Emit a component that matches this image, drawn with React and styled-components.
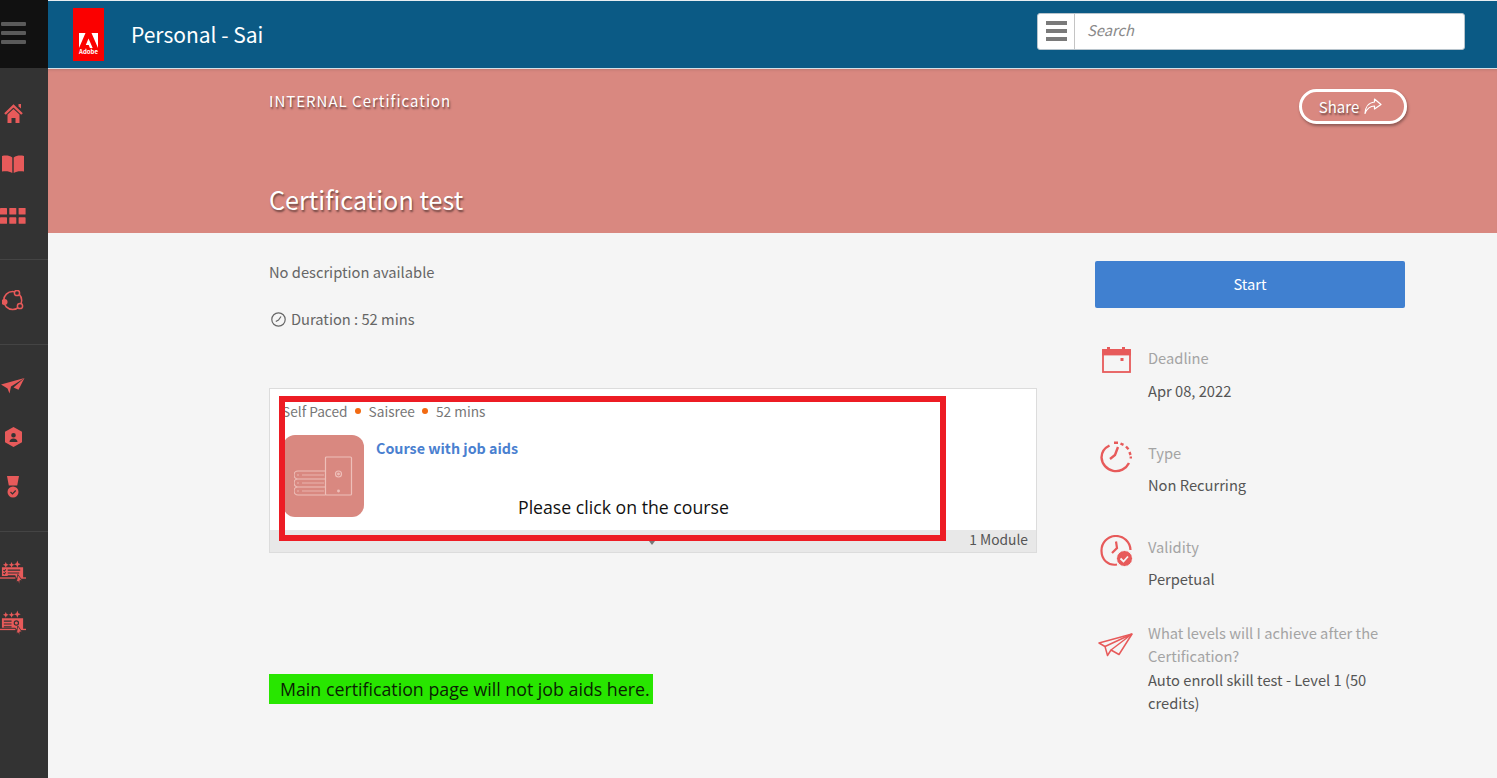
import React from 'react';
import styled, { createGlobalStyle } from 'styled-components';

const SOURCE = `"Noto Sans CJK SC", "Source Sans Pro", "Noto Sans", sans-serif`;
const SEGOE = `"Open Sans", "Noto Sans", sans-serif`;
const CORAL = '#e75a5a';

const Global = createGlobalStyle`
    html, body { margin: 0; padding: 0; background: #f5f5f5; }
    body { font-family: ${SOURCE}; overflow: hidden; }
    * { box-sizing: border-box; }
`;

const Page = styled.div`
    display: flex;
    width: 1497px;
    height: 778px;
    overflow: hidden;
`;

const Rail = styled.nav`
    width: 48px;
    flex: none;
    background: #333333;
`;

const RailTop = styled.div`
    height: 68px;
    background: #111111;
    display: flex;
    flex-direction: column;
    justify-content: center;
    gap: 5px;
    padding: 0 0 2px 1px;
`;

const RailBar = styled.span`
    display: block;
    width: 25px;
    height: 4px;
    border-radius: 1px;
    background: #5a5a5a;
`;

const RailGroup = styled.div`
    padding: ${(p) => p.$top}px 5px ${(p) => p.$bottom}px 0;
    border-bottom: ${(p) => (p.$last ? 'none' : '1px solid #444444')};
`;

const RailItem = styled.div`
    width: 26px;
    height: ${(p) => p.$h || 51}px;
    display: flex;
    align-items: center;
    justify-content: center;
    color: ${CORAL};
`;

const Main = styled.div`
    flex: 1;
    min-width: 0;
`;

const Header = styled.header`
    height: 69px;
    background: #0b5a85;
    border-top: 1px solid #e8eef2;
    border-bottom: 1px solid #d5e0e6;
    display: flex;
    align-items: center;
    padding: 0 32px 0 25px;
`;

const Logo = styled.div`
    width: 31px;
    height: 53px;
    background: #fb0000;
    color: #fff;
    display: flex;
    flex-direction: column;
    align-items: center;
    justify-content: flex-end;
    padding-bottom: 6px;
    font-size: 6px;
    font-weight: 700;
    line-height: 7px;
`;

const OrgName = styled.div`
    margin: 0 0 2px 27px;
    color: #fff;
    font-size: 21px;
    flex: 1;
`;

const SearchBox = styled.div`
    width: 428px;
    height: 37px;
    margin-bottom: 7px;
    display: flex;
    background: #fff;
    border: 1px solid #b8c4cc;
    border-radius: 3px;
`;

const SearchMenu = styled.div`
    width: 37px;
    border-right: 1px solid #c4c4c4;
    display: flex;
    flex-direction: column;
    justify-content: center;
    align-items: center;
    gap: 4px;
`;

const SearchBar = styled.span`
    width: 21px;
    height: 4px;
    background: #7a7a7a;
`;

const SearchHint = styled.div`
    padding-left: 12px;
    font-size: 14.7px;
    font-style: italic;
    line-height: 31px;
    color: #8a8a8a;
`;

const Banner = styled.section`
    height: 164px;
    background: #d98880;
    box-shadow: inset 0 3px 3px -2px rgba(0, 0, 0, 0.12);
    padding: 20px 90px 0 221px;
    color: #fff;
    text-shadow: 1px 2px 2px rgba(0, 0, 0, 0.5);
`;

const BannerTop = styled.div`
    display: flex;
    justify-content: space-between;
    align-items: flex-start;
    height: 90px;
`;

const Kicker = styled.div`
    font-size: 15px;
    line-height: 24px;
    letter-spacing: 1px;
`;

const ShareButton = styled.div`
    width: 108px;
    height: 35px;
    border: 3px solid #fff;
    border-radius: 18px;
    display: flex;
    align-items: center;
    justify-content: center;
    gap: 5px;
    padding-right: 5px;
    font-size: 15px;
    box-shadow: 1px 2px 3px rgba(0, 0, 0, 0.35);
`;

const BannerTitle = styled.h1`
    margin: 0;
    font-size: 25.2px;
    font-weight: 400;
    line-height: 40px;
`;

const Body = styled.div`
    display: flex;
    gap: 58px;
    padding: 28px 92px 0 221px;
`;

const LeftCol = styled.div`
    width: 768px;
    flex: none;
`;

const Paragraph = styled.div`
    font-size: 14.7px;
    line-height: 24px;
    color: #666666;
    margin-top: -1px;
`;

const Duration = styled(Paragraph)`
    display: flex;
    align-items: center;
    gap: 5px;
    margin-top: 23px;
    padding-left: 2px;
`;

const Card = styled.div`
    position: relative;
    margin-top: 57px;
    height: 165px;
    background: #fff;
    border: 1px solid #dcdcdc;
    display: flex;
    flex-direction: column;
`;

const CardMeta = styled.div`
    display: flex;
    align-items: center;
    padding: 10px 0 0 12px;
    font-size: 13.7px;
    line-height: 24px;
    color: #777777;
`;

const Dot = styled.span`
    width: 6px;
    height: 6px;
    border-radius: 50%;
    background: #f26a12;
    margin: 0 7.5px;
`;

const CardBody = styled.div`
    flex: 1;
    display: flex;
    gap: 12px;
    padding: 12px 0 0 13px;
`;

const Thumb = styled.div`
    width: 81px;
    height: 82px;
    padding: 21px 0 0 11px;
    border-radius: 12px;
    background: #d98880;

    svg {
        display: block;
    }
`;

const CourseTitle = styled.div`
    font-size: 14.3px;
    font-weight: 600;
    line-height: 26px;
    color: #4a80d0;
`;

const CardFoot = styled.div`
    height: 22px;
    background: #e8e8e8;
    font-size: 13.8px;
    line-height: 19px;
    color: #555555;
    text-align: right;
    padding-right: 8px;
`;

const Notch = styled.span`
    position: absolute;
    left: 379px;
    bottom: 7px;
    width: 0;
    height: 0;
    border-left: 3px solid transparent;
    border-right: 3px solid transparent;
    border-top: 4px solid #777777;
`;

const Callout = styled.div`
    position: absolute;
    left: 9px;
    top: 7px;
    width: 667px;
    height: 145px;
    border: 6px solid #ed1c24;
    display: flex;
    align-items: flex-end;
    padding: 0 0 16px 233px;
    font-family: ${SEGOE};
    font-size: 17.7px;
    line-height: 24px;
    color: #111111;
`;

const GreenNote = styled.div`
    margin-top: 121px;
    width: 384px;
    height: 30px;
    background: #28e600;
    font-family: ${SEGOE};
    font-size: 17.8px;
    line-height: 30px;
    color: #0a1f04;
    padding-left: 11px;
    white-space: nowrap;
`;

const RightCol = styled.aside`
    width: 310px;
    flex: none;
`;

const StartButton = styled.div`
    height: 47px;
    border-radius: 2px;
    background: #4080d0;
    color: #fff;
    font-size: 14.7px;
    padding-bottom: 2px;
    display: flex;
    align-items: center;
    justify-content: center;
`;

const InfoRow = styled.div`
    display: flex;
    align-items: flex-start;
    margin-top: ${(p) => p.$gap}px;
`;

const InfoIcon = styled.div`
    width: 53px;
    flex: none;
    display: flex;
    padding-top: ${(p) => p.$pad || 0}px;
    padding-left: ${(p) => p.$left || 5}px;
    color: ${CORAL};
`;

const InfoLabel = styled.div`
    font-size: 14.7px;
    line-height: 23.5px;
    color: #a4a4a4;
`;

const InfoValue = styled.div`
    margin-top: ${(p) => p.$gap}px;
    font-size: 14.7px;
    line-height: 23.5px;
    color: #555555;
`;

const InfoText = styled.div`
    width: 252px;
`;

const Home = () => (
    <svg width="19" height="19" viewBox="0 0 19 19" fill="none" stroke="currentColor">
        <path d="M1 10 9.500 2l8.500 8" strokeWidth="2.400" />
        <path fillRule="evenodd" d="M3.500 10.500 9.500 5l6 5.500V19h-4v-5h-4v5h-4z" fill="currentColor" stroke="none" />
        <path d="M14.500 0H17v4.500L14.500 2.500z" fill="currentColor" stroke="none" />
    </svg>
);

const Book = () => (
    <svg width="22" height="19" viewBox="0 0 22 19" fill="currentColor">
        <path d="M0 1C4 0 7.500 .5 10.300 2.500V18C7.500 16.200 4 15.800 0 16.500z" />
        <path d="M22 1C18 0 14.500 .5 11.700 2.500V18c2.800-1.800 6.300-2.200 10.300-1.500z" />
    </svg>
);

const Grid = () => (
    <svg width="26" height="16" viewBox="0 0 26 16" fill="currentColor">
        {[0, 9.300, 18.600].map((x) => (
            <g key={x}>
                <rect x={x} y="0" width="7" height="6.500" rx=".6" />
                <rect x={x} y="9.300" width="7" height="6.500" rx=".6" />
            </g>
        ))}
    </svg>
);

const Org = () => (
    <svg width="23" height="22" viewBox="0 0 23 22" fill="none" stroke="currentColor" strokeWidth="1.500">
        <circle cx="10.700" cy="10.500" r="9" />
        <circle cx="15" cy="3" r="2.600" fill="#333" />
        <circle cx="18" cy="16" r="2.600" fill="#333" />
        <circle cx="2.500" cy="12" r="2.300" fill="currentColor" />
    </svg>
);

const PlaneSolid = () => (
    <svg width="24" height="16" viewBox="0 0 24 16" fill="currentColor">
        <path d="M0 6.500 23.500 0 10 8.500l-1.500 7-2-5z" />
        <path d="M23.500 0 12.500 9.500l5 2.200z" />
    </svg>
);

const Hexagon = () => (
    <svg width="17" height="20" viewBox="0 0 17 20" fill="currentColor">
        <path fillRule="evenodd" d="M8.500 0 17 4.800v10.400L8.500 20 0 15.200V4.800zM8.500 6a2.300 2.300 0 1 0 0 4.600 2.300 2.300 0 0 0 0-4.600zM4.500 15h8c0-2.200-1.800-3.500-4-3.500s-4 1.300-4 3.500z" />
    </svg>
);

const Medal = () => (
    <svg width="14" height="23" viewBox="0 0 14 23" fill="currentColor">
        <path d="M1 0h12l-1.800 9.500H2.800z" />
        <circle cx="7" cy="16" r="5.500" />
        <path d="m4.500 16 2 2 3.200-3.500" stroke="#333" strokeWidth="1.200" fill="none" />
    </svg>
);

const STARS = 'M6 1.500 6.900 3.600 9 4.500 6.900 5.400 6 7.500 5.100 5.400 3 4.500 5.100 3.600zM12 1.500 12.900 3.600 15 4.500 12.900 5.400 12 7.500 11.100 5.400 9 4.500 11.100 3.600zM18 0 19 2.800 21.500 4 19 5 18 7.500 17 5 14.500 4 17 2.800z';

const CertList = () => (
    <svg width="27" height="26" viewBox="0 0 27 26" fill="currentColor">
        <path d={STARS} />
        <path d="M2 7h22v11.500h-6.500L16 16H2z" />
        <rect x="0" y="17.500" width="16" height="1.400" />
        <rect x="21" y="17.500" width="6" height="1.400" />
        <path d="M18.500 14.500 23 21l-2.400-.3-.2 4.300-1.600-3.500-1.800 1z" stroke="#333" strokeWidth=".8" />
        <g fill="none" stroke="#333" strokeWidth="1.100">
            <path d="M8 10h13M8 13h12M8 16h8" />
            <path d="M3.500 10l1 1 1.500-1.800M3.500 13l1 1 1.500-1.800" />
        </g>
    </svg>
);

const CertSearch = () => (
    <svg width="27" height="26" viewBox="0 0 27 26" fill="currentColor">
        <path d={STARS} />
        <path d="M2 8h22v12h-6.500L16 18H2z" />
        <rect x="0" y="19" width="16" height="1.400" />
        <rect x="21" y="19" width="6" height="1.400" />
        <path d="M18.500 16 23 22.500l-2.400-.3-.2 3.800-1.600-3-1.800 1z" stroke="#333" strokeWidth=".8" />
        <g fill="none" stroke="#333" strokeWidth="1.200">
            <path d="M4 11h8M4 14h8M4 17h8" />
            <circle cx="17" cy="13" r="2.200" />
        </g>
    </svg>
);

const AdobeMark = () => (
    <svg width="19" height="15" viewBox="0 0 19 15" fill="#fff">
        <path d="M0 0h6.500L0 15zM12.500 0H19v15zM9.500 5.500l4.200 9.500h-2.800l-1.200-3H6.800z" />
    </svg>
);

const ShareArrow = () => (
    <svg width="18" height="17" viewBox="0 0 18 17" fill="none" stroke="#fff" strokeWidth="1.200" strokeLinejoin="round">
        <path d="M10.500 1 17 6.500 10.500 11V8C6 8 3 10.500 1 15.500 1.300 9.500 4.500 4.500 10.500 4z" />
    </svg>
);

const SmallClock = () => (
    <svg width="15" height="15" viewBox="0 0 15 15" fill="none" stroke="#666" strokeWidth="1.200">
        <circle cx="7.500" cy="7.500" r="6.700" />
        <path d="M10 4.500 7.500 8 4.800 9.500" />
    </svg>
);

const Shelf = () => (
    <svg width="60" height="40" viewBox="0 0 60 40" fill="none" stroke="#eebfb9" strokeWidth="1.200">
        <rect x="31.500" y="1" width="26" height="38" rx="1" />
        <circle cx="44.500" cy="18" r="3" />
        <circle cx="44.500" cy="18" r=".8" fill="#eebfb9" />
        <circle cx="44.500" cy="35" r=".8" fill="#eebfb9" />
        <path d="M31.500 15H4a3.500 3.500 0 0 0 0 8h27.500M31.500 23H4a3.500 3.500 0 0 0 0 8h27.500M31.500 31H4a3.500 3.500 0 0 0 0 8h27.500" />
        <path d="M3 19h2M8 19h22M3 27h2M8 27h22M3 35h2M8 35h22" strokeWidth=".8" />
    </svg>
);

const Calendar = () => (
    <svg width="29" height="27" viewBox="0 0 29 27" fill="none" stroke="currentColor" strokeWidth="1.800">
        <rect x="1" y="4" width="27" height="22" />
        <rect x="1" y="4" width="27" height="4.500" fill="currentColor" />
        <rect x="5" y="1" width="3" height="5" fill="currentColor" stroke="none" />
        <rect x="20" y="1" width="3" height="5" fill="currentColor" stroke="none" />
        <rect x="18.500" y="12" width="3" height="3" fill="currentColor" stroke="none" />
    </svg>
);

const Stopwatch = () => (
    <svg width="33" height="32" viewBox="0 0 33 32" fill="none" stroke="currentColor" strokeWidth="2.400">
        <path d="M9.500 4.500C4.500 7 1.500 11.500 1.500 16.500a14.500 14.500 0 0 0 27.500 5.500" />
        <path d="M14 1.800h4M20.500 2.500l3 1.400M26 5.500l2.500 2.800M29.500 11l1 3M30.800 15.500v2" />
        <path d="M18 6 15 14 10 18" />
    </svg>
);

const ValidClock = () => (
    <svg width="33" height="32" viewBox="0 0 33 32" fill="none" stroke="currentColor" strokeWidth="2.200">
        <path d="M17 29.500C8 31 1.500 24.500 1.500 16a14.500 14.500 0 0 1 29-1" />
        <path d="M16 6.500 17 13 12 18" />
        <circle cx="24.500" cy="23.500" r="8" fill="currentColor" stroke="#f5f5f5" strokeWidth="1" />
        <path d="m20.500 23.500 3 3 4.500-5" stroke="#f5f5f5" strokeWidth="1.800" />
    </svg>
);

const PlaneOutline = () => (
    <svg width="35" height="24" viewBox="0 0 35 24" fill="none" stroke="currentColor" strokeWidth="1.500" strokeLinejoin="round">
        <path d="M1 10 34 1 21 21.500l-8-4.500-3.500 5.500-2.500-9z" />
        <path d="M34 1 7 13.500M34 1 13 17" />
    </svg>
);

export default function App() {
    return (
        <Page>
            <Global />
            <Rail>
                <RailTop>
                    <RailBar />
                    <RailBar />
                    <RailBar />
                </RailTop>
                <RailGroup $top={20} $bottom={18}>
                    <RailItem><Home /></RailItem>
                    <RailItem><Book /></RailItem>
                    <RailItem><Grid /></RailItem>
                </RailGroup>
                <RailGroup $top={15} $bottom={18}>
                    <RailItem><Org /></RailItem>
                </RailGroup>
                <RailGroup $top={15} $bottom={18}>
                    <RailItem><PlaneSolid /></RailItem>
                    <RailItem><Hexagon /></RailItem>
                    <RailItem><Medal /></RailItem>
                </RailGroup>
                <RailGroup $top={16} $bottom={0} $last>
                    <RailItem $h={50}><CertList /></RailItem>
                    <RailItem $h={50}><CertSearch /></RailItem>
                </RailGroup>
            </Rail>
            <Main>
                <Header>
                    <Logo>
                        <AdobeMark />
                        <span>Adobe</span>
                    </Logo>
                    <OrgName>Personal - Sai</OrgName>
                    <SearchBox>
                        <SearchMenu>
                            <SearchBar />
                            <SearchBar />
                            <SearchBar />
                        </SearchMenu>
                        <SearchHint>Search</SearchHint>
                    </SearchBox>
                </Header>
                <Banner>
                    <BannerTop>
                        <Kicker>INTERNAL Certification</Kicker>
                        <ShareButton>Share <ShareArrow /></ShareButton>
                    </BannerTop>
                    <BannerTitle>Certification test</BannerTitle>
                </Banner>
                <Body>
                    <LeftCol>
                        <Paragraph>No description available</Paragraph>
                        <Duration><SmallClock /> Duration : 52 mins</Duration>
                        <Card>
                            <CardMeta>
                                Self Paced <Dot /> Saisree <Dot /> 52 mins
                            </CardMeta>
                            <CardBody>
                                <Thumb><Shelf /></Thumb>
                                <CourseTitle>Course with job aids</CourseTitle>
                            </CardBody>
                            <CardFoot>1 Module</CardFoot>
                            <Notch />
                            <Callout>Please click on the course</Callout>
                        </Card>
                        <GreenNote>Main certification page will not job aids here.</GreenNote>
                    </LeftCol>
                    <RightCol>
                        <StartButton>Start</StartButton>
                        <InfoRow $gap={38}>
                            <InfoIcon $pad={0} $left={7}><Calendar /></InfoIcon>
                            <InfoText>
                                <InfoLabel>Deadline</InfoLabel>
                                <InfoValue $gap={9.5}>Apr 08, 2022</InfoValue>
                            </InfoText>
                        </InfoRow>
                        <InfoRow $gap={38}>
                            <InfoIcon $pad={0}><Stopwatch /></InfoIcon>
                            <InfoText>
                                <InfoLabel>Type</InfoLabel>
                                <InfoValue $gap={9}>Non Recurring</InfoValue>
                            </InfoText>
                        </InfoRow>
                        <InfoRow $gap={38}>
                            <InfoIcon $pad={0}><ValidClock /></InfoIcon>
                            <InfoText>
                                <InfoLabel>Validity</InfoLabel>
                                <InfoValue $gap={9}>Perpetual</InfoValue>
                            </InfoText>
                        </InfoRow>
                        <InfoRow $gap={30}>
                            <InfoIcon $pad={12} $left={3}><PlaneOutline /></InfoIcon>
                            <InfoText>
                                <InfoLabel>What levels will I achieve after the Certification?</InfoLabel>
                                <InfoValue $gap={0}>Auto enroll skill test - Level 1 (50 credits)</InfoValue>
                            </InfoText>
                        </InfoRow>
                    </RightCol>
                </Body>
            </Main>
        </Page>
    );
}
